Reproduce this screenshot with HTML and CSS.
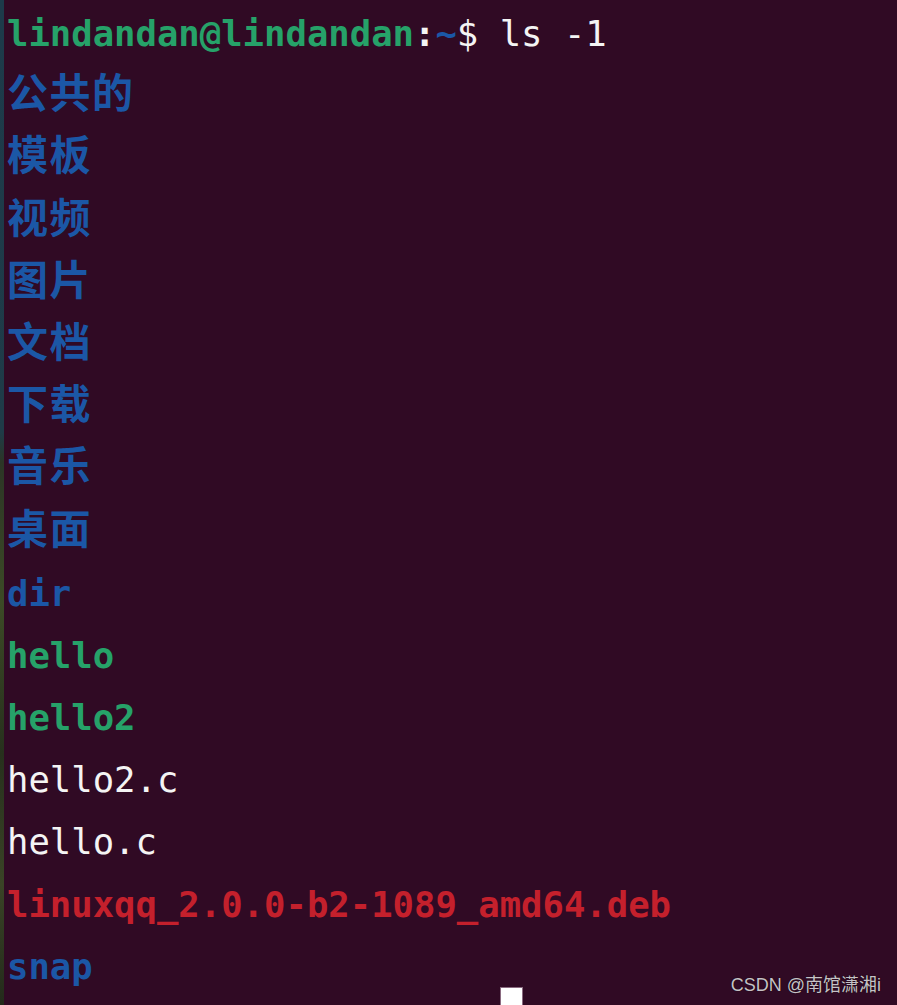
FILE: index.html
```html
<!DOCTYPE html>
<html lang="zh-CN">
<head>
<meta charset="utf-8">
<title>Terminal</title>
<link rel="stylesheet" href="styles.css">
</head>
<body>
<div class="screen">
  <div class="edge"></div>
  <div class="term">
    <div class="line"><span class="g b">lindandan@lindandan</span><span class="w b">:</span><span class="bl b">~</span><span class="w">$ ls -1</span></div>
    <div class="line"><span class="bl b cjk">公共的</span></div>
    <div class="line"><span class="bl b cjk">模板</span></div>
    <div class="line"><span class="bl b cjk">视频</span></div>
    <div class="line"><span class="bl b cjk">图片</span></div>
    <div class="line"><span class="bl b cjk">文档</span></div>
    <div class="line"><span class="bl b cjk">下载</span></div>
    <div class="line"><span class="bl b cjk">音乐</span></div>
    <div class="line"><span class="bl b cjk">桌面</span></div>
    <div class="line"><span class="bl b">dir</span></div>
    <div class="line"><span class="g b">hello</span></div>
    <div class="line"><span class="g b">hello2</span></div>
    <div class="line"><span class="w">hello2.c</span></div>
    <div class="line"><span class="w">hello.c</span></div>
    <div class="line"><span class="r b">linuxqq_2.0.0-b2-1089_amd64.deb</span></div>
    <div class="line"><span class="bl b">snap</span></div>
  </div>
  <div class="cursor"></div>
  <div class="watermark">CSDN @南馆潇湘i</div>
</div>
</body>
</html>
```

FILE: styles.css
```css
html, body {
  margin: 0;
  padding: 0;
  background: #300a24;
}

.screen {
  position: relative;
  display: flex;
  width: 897px;
  height: 1005px;
  overflow: hidden;
  background: #300a24;
}

.edge {
  width: 4px;
  flex: 0 0 4px;
  background: linear-gradient(180deg, #1d3a4a 0%, #1f3b48 43%, #2c3526 46%, #3c4a26 60%, #27301d 75%, #3a4326 88%, #232a1b 100%);
}

.term {
  flex: 1;
  padding: 3px 0 0 3px;
  font-family: "DejaVu Sans Mono", "Liberation Mono", monospace;
  font-size: 35.6px;
  color: #f2f2f2;
}

.line {
  height: 62.2px;
  line-height: 62.2px;
  white-space: pre;
}

.b { font-weight: 700; }
.g { color: #26a269; }
.bl { color: #1b57a6; }
.r { color: #c4202c; }
.w { color: #f4f4f4; }

.cjk {
  font-family: "Noto Sans CJK SC", "DejaVu Sans Mono", sans-serif;
  font-size: 41px;
  line-height: 0;
  letter-spacing: 1.5px;
}

.cursor {
  position: absolute;
  left: 501px;
  top: 988px;
  width: 21px;
  height: 20px;
  background: #ffffff;
  box-shadow: 0 0 0 1px #8a6a80;
}

.watermark {
  position: absolute;
  right: 16px;
  bottom: 9px;
  font-family: "Liberation Sans", "Noto Sans CJK SC", sans-serif;
  font-size: 18px;
  color: #c6c2c6;
  text-shadow: 0 0 1px #000;
}
```
